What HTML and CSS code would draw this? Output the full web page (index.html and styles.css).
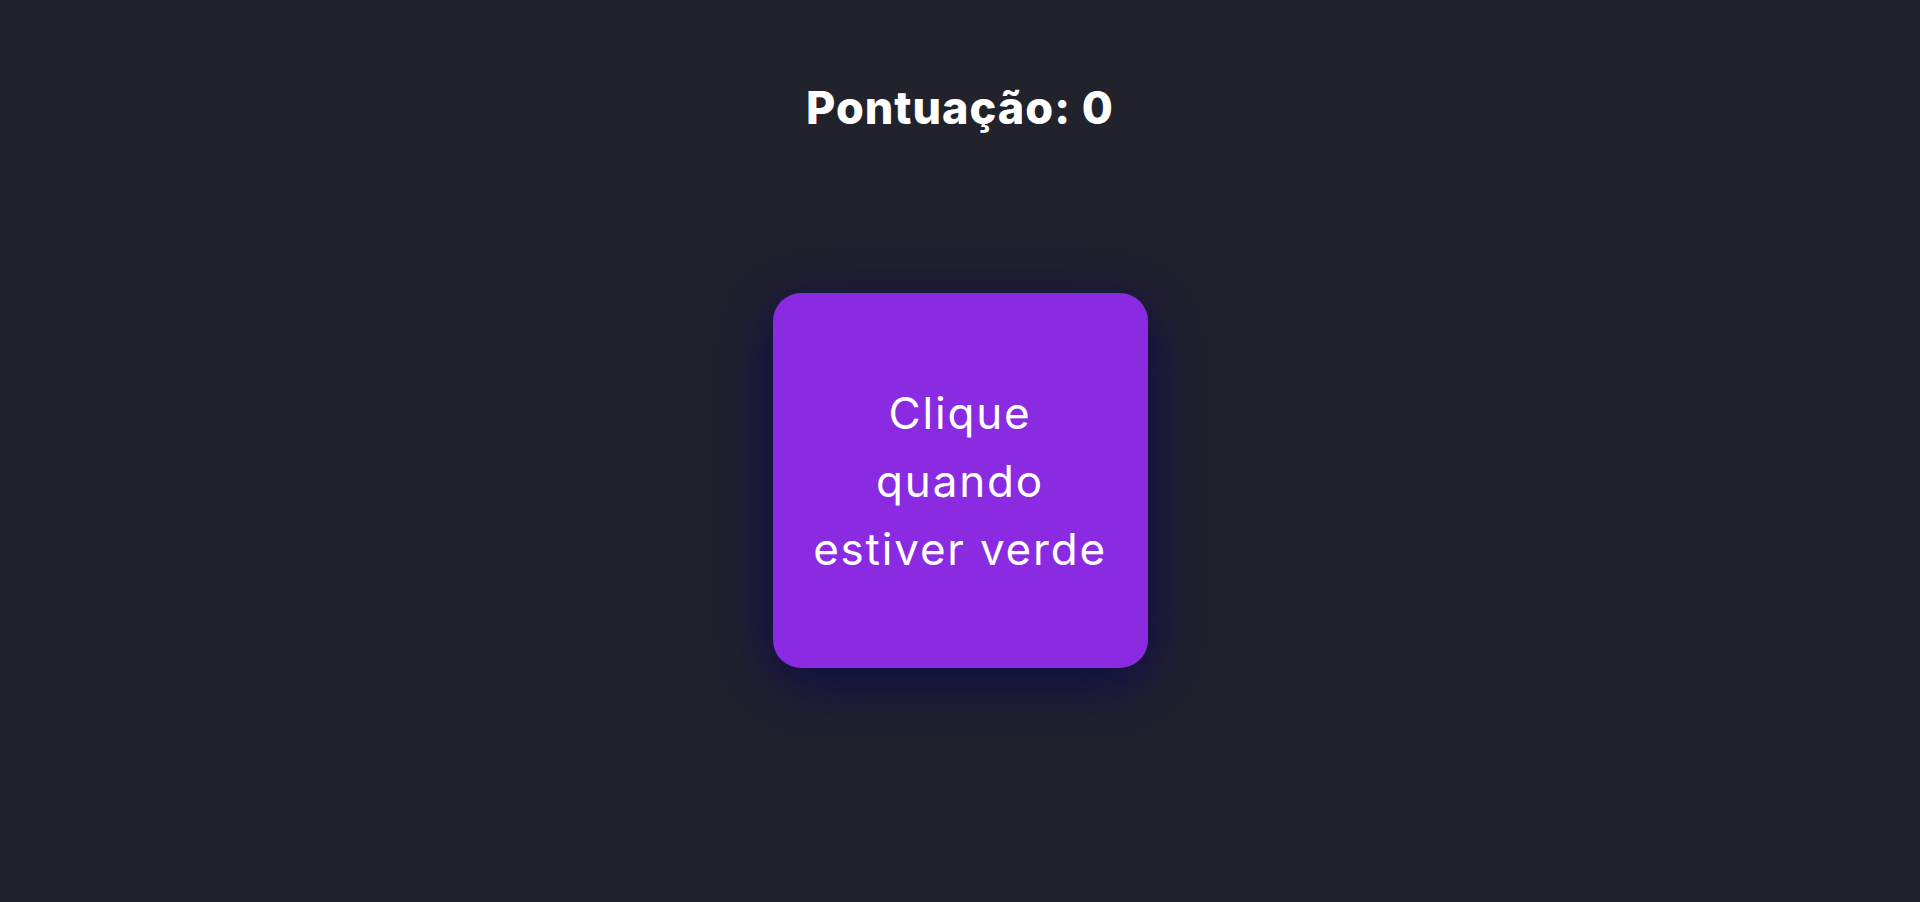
FILE: index.html
```html
<!DOCTYPE html>
<html lang="pt-BR">
<head>
<meta charset="utf-8">
<title>Jogo de Reação</title>
<link rel="stylesheet" href="styles.css">
</head>
<body>
<main class="game">
  <h1 class="score">Pontuação: <span class="score-value">0</span></h1>
  <div class="target">Clique quando estiver verde</div>
</main>
</body>
</html>
```

FILE: styles.css
```css
html, body {
  margin: 0;
  padding: 0;
  height: 100%;
}

body {
  background: #22222d;
  color: #ffffff;
  font-family: Inter, "Open Sans", sans-serif;
}

.game {
  display: flex;
  flex-direction: column;
  align-items: center;
  padding-top: 74px;
}

.score {
  margin: 0;
  font-size: 45px;
  font-weight: 800;
  line-height: 68px;
  letter-spacing: 1px;
}

.target {
  margin-top: 151px;
  width: 375px;
  height: 375px;
  box-sizing: border-box;
  padding: 0 40px;
  display: flex;
  align-items: center;
  justify-content: center;
  text-align: center;
  background: #8a2be2;
  border-radius: 28px;
  box-shadow: 0 12px 60px 4px #0e0b4a;
  font-size: 44px;
  font-weight: 400;
  line-height: 68px;
  letter-spacing: 1.8px;
  cursor: pointer;
  user-select: none;
}
```
